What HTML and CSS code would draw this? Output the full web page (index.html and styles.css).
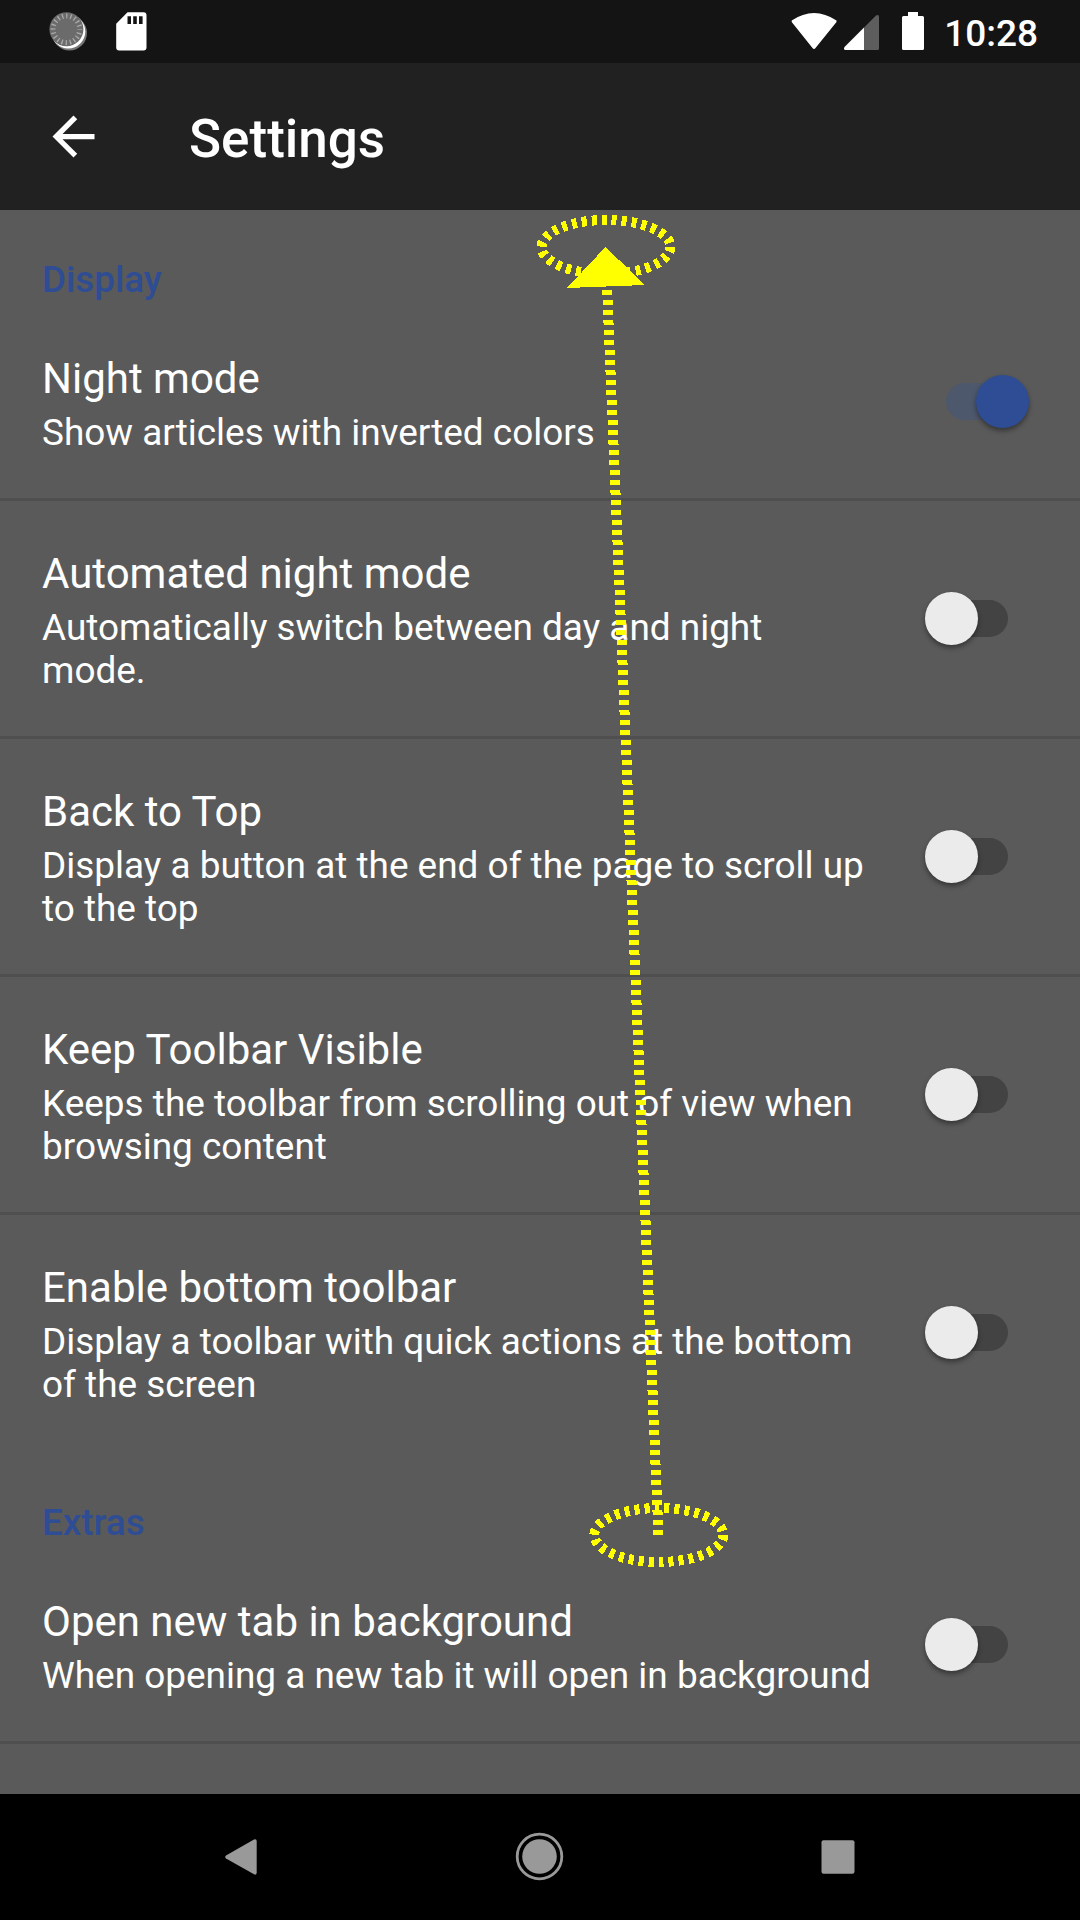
FILE: index.html
```html
<!DOCTYPE html>
<html lang="en">
<head>
<meta charset="utf-8">
<title>Settings</title>
<link rel="stylesheet" href="styles.css">
</head>
<body>
<div class="screen">
  <header class="status">
    <svg class="status-left" width="110" height="63" viewBox="45 0 110 63">
      <circle cx="69.5" cy="33" r="17.5" fill="#777"/>
      <circle cx="68.3" cy="31.5" r="17" fill="#fff"/>
      <circle cx="66.4" cy="29.3" r="17" fill="#6b6b6b"/>
      <circle cx="66.4" cy="29.3" r="13.3" fill="none" stroke="#a9a9a9" stroke-width="5" stroke-dasharray="1.3 2.878" stroke-dashoffset="0.65"/>
      <path fill="#fff" fill-rule="evenodd" d="M127.5 12.3H143.500a3 3 0 0 1 3 3V47.500a3 3 0 0 1-3 3H119.200a3 3 0 0 1-3-3V23.800ZM127.500 16.300V24H131V16.300ZM133.200 16.300V24H136.800V16.300ZM139 16.300V24H142.600V16.300Z"/>
    </svg>
    <div class="status-right">
      <svg width="134" height="63" viewBox="791 0 134 63">
        <path fill="#fff" d="M791.700 20.500Q814 5.500 836.500 20.500V22L815.500 48Q814 50 812.500 48L791.700 22Z"/>
        <path fill="#5d5d5d" d="M864 27.500L876 15.500Q879 13.800 879 17V48.500a1.500 1.500 0 0 1-1.500 1.500H864Z"/>
        <path fill="#fff" d="M864 27.500V50H845.500Q843 49.500 844.500 47Z"/>
        <path fill="#fff" d="M908 12H918V16H922.500a1.500 1.500 0 0 1 1.500 1.500V48.500a1.500 1.500 0 0 1-1.500 1.500H903.500a1.500 1.500 0 0 1-1.500-1.500V17.500a1.500 1.500 0 0 1 1.500-1.500H908Z"/>
      </svg>
      <span class="clock">10:28</span>
    </div>
  </header>

  <div class="toolbar">
    <svg class="back" viewBox="0 0 24 24"><path fill="#fff" d="M20 11H7.830l5.590-5.590L12 4l-8 8 8 8 1.410-1.410L7.830 13H20v-2z"/></svg>
    <h1 class="title">Settings</h1>
  </div>

  <main class="list">
    <h2 class="category first">Display</h2>
    <section class="row plain">
      <div class="label">
        <div class="name">Night mode</div>
        <div class="summary">Show articles with inverted colors</div>
      </div>
      <div class="switch on"><span class="thumb"></span></div>
    </section>
    <section class="row">
      <div class="label">
        <div class="name">Automated night mode</div>
        <div class="summary">Automatically switch between day and night<br>mode.</div>
      </div>
      <div class="switch"><span class="thumb"></span></div>
    </section>
    <section class="row">
      <div class="label">
        <div class="name">Back to Top</div>
        <div class="summary">Display a button at the end of the page to scroll up<br>to the top</div>
      </div>
      <div class="switch"><span class="thumb"></span></div>
    </section>
    <section class="row">
      <div class="label">
        <div class="name">Keep Toolbar Visible</div>
        <div class="summary">Keeps the toolbar from scrolling out of view when<br>browsing content</div>
      </div>
      <div class="switch"><span class="thumb"></span></div>
    </section>
    <section class="row">
      <div class="label">
        <div class="name">Enable bottom toolbar</div>
        <div class="summary">Display a toolbar with quick actions at the bottom<br>of the screen</div>
      </div>
      <div class="switch"><span class="thumb"></span></div>
    </section>
    <h2 class="category">Extras</h2>
    <section class="row plain">
      <div class="label">
        <div class="name">Open new tab in background</div>
        <div class="summary">When opening a new tab it will open in background</div>
      </div>
      <div class="switch"><span class="thumb"></span></div>
    </section>
    <div class="row-end"></div>
  </main>

  <nav class="navbar">
    <svg width="1080" height="126" viewBox="0 1794 1080 126" fill="#999">
      <path d="M254 1839.600Q256.700 1838.500 256.700 1841.500V1872.500Q256.700 1875.500 254 1874.300L226 1858.500Q224.400 1857 226 1855.400Z"/>
      <circle cx="539.500" cy="1856.500" r="17.300"/>
      <circle cx="539.500" cy="1856.500" r="22.300" fill="none" stroke="#999" stroke-width="2.800"/>
      <rect x="821.500" y="1840.300" width="33" height="33.500" rx="2"/>
    </svg>
  </nav>

  <svg class="gesture" width="1080" height="1920" viewBox="0 0 1080 1920" shape-rendering="crispEdges">
    <g fill="none" stroke="#ff0" stroke-width="10" stroke-dasharray="5 5">
      <ellipse cx="606" cy="247" rx="64.500" ry="27"/>
      <ellipse cx="658.800" cy="1535" rx="64.500" ry="27"/>
      <path d="M595.200 1535V287" transform="matrix(1 0 .0412 1 0 0)"/>
    </g>
    <path fill="#ff0" d="M605.500 247L645 285L567 288Z"/>
  </svg>
</div>
</body>
</html>
```
FILE: styles.css
```css
* { box-sizing: border-box; }

body {
  margin: 0;
  font-family: Roboto, "Liberation Sans", sans-serif;
  color: #fff;
  background: #000;
}

svg { display: block; }

.screen {
  position: relative;
  display: flex;
  flex-direction: column;
  width: 1080px;
  height: 1920px;
  overflow: hidden;
}

.status {
  display: flex;
  justify-content: space-between;
  height: 63px;
  padding: 0 42px 0 45px;
  background: #141414;
}

.status-right { display: flex; gap: 19px; }

.clock {
  font-size: 37px;
  font-weight: 500;
  line-height: 67px;
}

.toolbar {
  display: flex;
  align-items: center;
  gap: 84px;
  height: 147px;
  padding-left: 42px;
  background: #212121;
}

.back { width: 63px; height: 63px; }

.title {
  margin: 0;
  padding-top: 4px;
  font-size: 53px;
  font-weight: 500;
  line-height: 62px;
}

.list {
  flex: 1;
  overflow: hidden;
  background: #5a5a5a;
}

.category {
  height: 99px;
  margin: 0;
  padding: 51px 42px 0;
  font-size: 36.75px;
  font-weight: 500;
  line-height: 43px;
  color: #2e4d94;
}

.category.first { height: 96px; padding-top: 48px; }

.row {
  display: flex;
  justify-content: space-between;
  align-items: center;
  padding: 45px 51px 44px 42px;
  border-top: 3px solid #4f4f4f;
}

.row.plain { border-top: 0; }
.row-end { border-top: 3px solid #4f4f4f; }

.label { white-space: nowrap; }

.name {
  font-size: 42px;
  line-height: 56px;
}

.summary {
  padding-top: 4px;
  font-size: 36.93px;
  line-height: 43px;
}

.switch {
  position: relative;
  display: flex;
  align-items: center;
  width: 104px;
  height: 53px;
  margin-bottom: 2px;
}

.switch::before {
  content: "";
  position: absolute;
  left: 21px;
  top: 8px;
  width: 62px;
  height: 37px;
  border-radius: 19px;
  background: #434343;
}

.thumb {
  position: relative;
  width: 53px;
  height: 53px;
  border-radius: 50%;
  background: #ebebeb;
  box-shadow: 0 3px 5px rgba(0, 0, 0, .4);
}

.on { justify-content: flex-end; }
.on::before { background: #4e586c; }
.on .thumb { background: #2e4d94; }

.navbar { height: 126px; background: #000; }

.gesture {
  position: absolute;
  top: 0;
  left: 0;
}
```
